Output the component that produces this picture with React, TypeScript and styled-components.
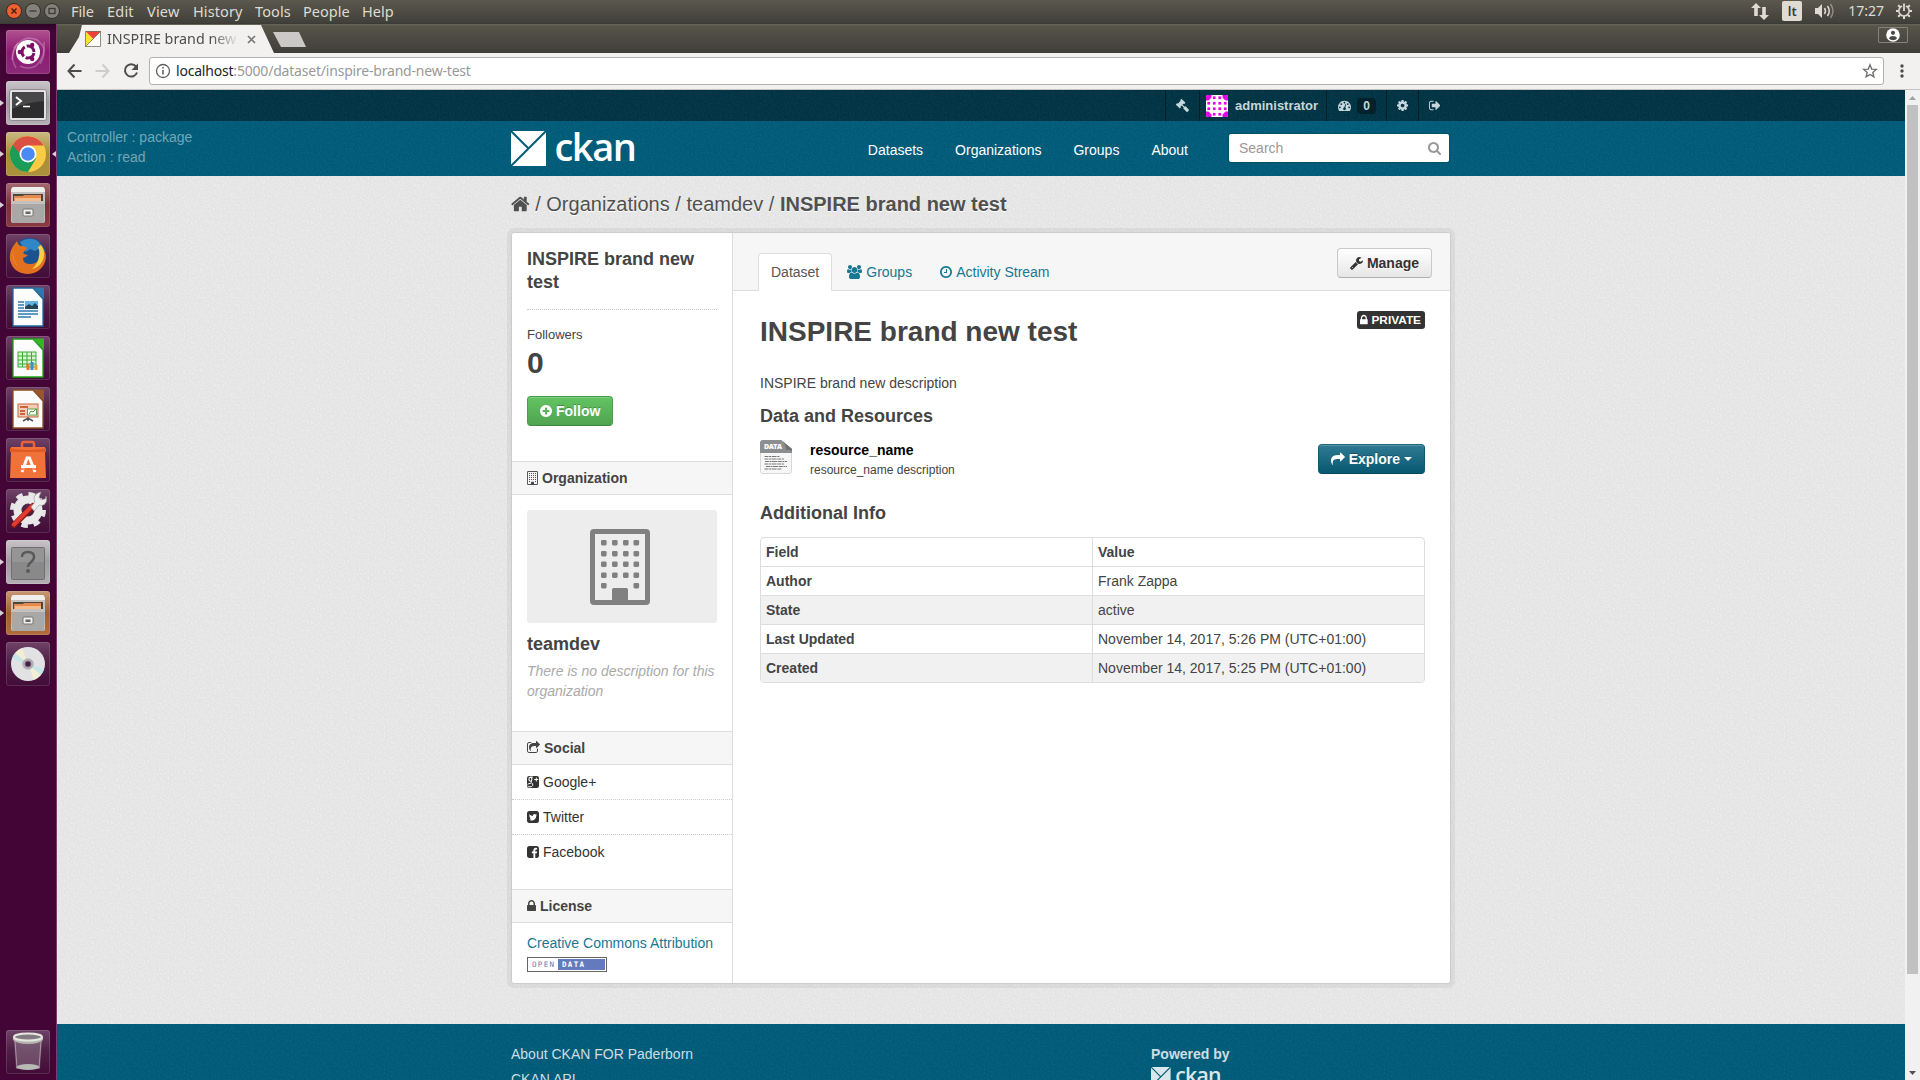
import React from 'react';
import styled, { createGlobalStyle, css } from 'styled-components';
import { FaGavel } from 'react-icons/fa';

const SANS = '"Liberation Sans", Arial, sans-serif';
const SHELL = '"Noto Sans", "Open Sans", sans-serif';

const noise = (rgb: string, alpha: number) =>
  `url("data:image/svg+xml,${encodeURIComponent(
    `<svg xmlns='http://www.w3.org/2000/svg' width='100' height='100'><filter id='n' x='0' y='0' width='100%' height='100%'><feTurbulence type='fractalNoise' baseFrequency='0.55' numOctaves='2' seed='4' stitchTiles='stitch'/><feColorMatrix values='0 0 0 0 ${rgb} 0 0 0 0 ${rgb} 0 0 0 0 ${rgb} ${alpha} 0 0 0 -${alpha * 0.4}'/></filter><rect width='100' height='100' filter='url(#n)'/></svg>`
  )}")`;
const GRAIN_LIGHT = noise('1', 0.8);
const GRAIN_DARK = noise('1', 0.1);

const GlobalStyle = createGlobalStyle`
  * { box-sizing: border-box; }
  body { margin: 0; overflow: hidden; }
  h1, h2, p { margin: 0; }
`;

/* ---------- icons ---------- */

type Glyph = [number, number, string];

const glyphs: Record<string, Glyph> = {
  home: [64, 1664, 'M1472 992v480q0 26-19 45t-45 19h-384v-384h-256v384h-384q-26 0-45-19t-19-45v-480q0-1 .5-3t.5-3l575-474 575 474q1 2 1 6zm223-69l-62 74q-8 9-21 11h-3q-13 0-21-7l-692-577-692 577q-12 8-24 7-13-2-21-11l-62-74q-8-10-7-23.5t11-21.5l719-599q32-26 76-26t76 26l244 204v-195q0-14 9-23t23-9h192q14 0 23 9t9 23v408l219 182q10 8 11 21.5t-7 23.5z'],
  search: [64, 1664, 'M1216 832q0-185-131.5-316.5t-316.5-131.5-316.5 131.5-131.5 316.5 131.5 316.5 316.5 131.5 316.5-131.5 131.5-316.5zm512 832q0 52-38 90t-90 38q-54 0-90-38l-343-342q-179 124-399 124-143 0-273.5-55.5t-225-150-150-225-55.5-273.5 55.5-273.5 150-225 225-150 273.5-55.5 273.5 55.5 225 150 150 225 55.5 273.5q0 220-124 399l343 343q37 37 37 90z'],
  cog: [128, 1536, 'M1152 896q0-106-75-181t-181-75-181 75-75 181 75 181 181 75 181-75 75-181zm512-109v222q0 12-8 23t-20 13l-185 28q-19 54-39 91 35 50 107 138 10 12 10 25t-9 23q-27 37-99 108t-94 71q-12 0-26-9l-138-108q-44 23-91 38-16 136-29 186-7 28-36 28h-222q-14 0-24.5-8.5t-11.5-21.5l-28-184q-49-16-90-37l-141 107q-10 9-25 9-14 0-25-11-126-114-165-168-7-10-7-23 0-12 8-23 15-21 51-66.5t54-70.5q-27-50-41-99l-183-27q-13-2-21-12.5t-8-23.5v-222q0-12 8-23t19-13l186-28q14-46 39-92-40-57-107-138-10-12-10-24 0-10 9-23 26-36 98.5-107.5t94.5-71.5q13 0 26 10l138 107q44-23 91-38 16-136 29-186 7-28 36-28h222q14 0 24.5 8.5t11.5 21.5l28 184q49 16 90 37l142-107q9-9 24-9 13 0 25 10 129 119 165 170 7 8 7 22 0 12-8 23-15 21-51 66.5t-54 70.5q26 50 41 98l183 28q13 2 21 12.5t8 23.5z'],
  plusCircle: [128, 1536, 'M1344 960v-128q0-26-19-45t-45-19h-256v-256q0-26-19-45t-45-19h-128q-26 0-45 19t-19 45v256h-256q-26 0-45 19t-19 45v128q0 26 19 45t45 19h256v256q0 26 19 45t45 19h128q26 0 45-19t19-45v-256h256q26 0 45-19t19-45zm320-64q0 209-103 385.5t-279.5 279.5-385.5 103-385.5-103-279.5-279.5-103-385.5 103-385.5 279.5-279.5 385.5-103 385.5 103 279.5 279.5 103 385.5z'],
  share: [0, 1792, 'M1792 640q0 26-19 45l-512 512q-19 19-45 19t-45-19-19-45v-256h-224q-98 0-175.5 6t-154 21.5-133 42.5-105.5 69.5-80 101-48.5 138.5-17.5 181q0 55 5 123 0 6 2.5 23.5t2.5 26.5q0 15-8.5 25t-23.5 10q-16 0-28-17-7-9-13-22t-13.5-30-10.5-24q-127-285-127-451 0-199 53-333 162-403 875-403h224v-256q0-26 19-45t45-19 45 19l512 512q19 19 19 45z'],
  shareSquare: [64, 1664, 'M1472 989v259q0 119-84.5 203.5t-203.5 84.5h-832q-119 0-203.5-84.5t-84.5-203.5v-832q0-119 84.5-203.5t203.5-84.5h255q13 0 22.5 9.5t9.5 22.5q0 27-26 32-77 26-133 60-10 4-16 4h-112q-66 0-113 47t-47 113v832q0 66 47 113t113 47h832q66 0 113-47t47-113v-214q0-19 18-29 28-13 54-37 16-16 35-8 21 9 21 29zm237-496l-384 384q-18 19-45 19-12 0-25-5-39-17-39-59v-192h-160q-323 0-438 131-119 137-74 473 3 23-20 34-8 2-12 2-16 0-26-13-10-14-21-31t-39.5-68.5-49.5-99.5-38.5-114-17.5-122q0-49 3.5-91t14-90 28-88 47-81.5 68.5-74 94.5-61.5 124.5-48.5 159.5-30.5 196.5-11h160v-192q0-42 39-59 13-5 25-5 26 0 45 19l384 384q19 19 19 45t-19 45z'],
  signOut: [64, 1568, 'M704 1440q0 4 1 20t.5 26.5-3 23.5-10 19.5-20.5 6.5h-320q-119 0-203.5-84.5t-84.5-203.5v-704q0-119 84.5-203.5t203.5-84.5h320q13 0 22.5 9.5t9.5 22.5q0 4 1 20t.5 26.5-3 23.5-10 19.5-20.5 6.5h-320q-66 0-113 47t-47 113v704q0 66 47 113t113 47h312l11.5 1 11.5 3 8 5.5 7 9 2 13.5zm928-544q0 26-19 45l-544 544q-19 19-45 19t-45-19-19-45v-288h-448q-26 0-45-19t-19-45v-384q0-26 19-45t45-19h448v-288q0-26 19-45t45-19 45 19l544 544q19 19 19 45z'],
  clock: [128, 1536, 'M1024 544v448q0 14-9 23t-23 9h-320q-14 0-23-9t-9-23v-64q0-14 9-23t23-9h224v-352q0-14 9-23t23-9h64q14 0 23 9t9 23zm416 352q0-148-73-273t-198-198-273-73-273 73-198 198-73 273 73 273 198 198 273 73 273-73 198-198 73-273zm224 0q0 209-103 385.5t-279.5 279.5-385.5 103-385.5-103-279.5-279.5-103-385.5 103-385.5 279.5-279.5 385.5-103 385.5 103 279.5 279.5 103 385.5z'],
  lock: [320, 1152, 'M640 768h512v-192q0-106-75-181t-181-75-181 75-75 181v192zm832 96v576q0 40-28 68t-68 28h-960q-40 0-68-28t-28-68v-576q0-40 28-68t68-28h32v-192q0-184 132-316t316-132 316 132 132 316v192h32q40 0 68 28t28 68z'],
  wrench: [64, 1664, 'M448 1472q0-26-19-45t-45-19-45 19-19 45 19 45 45 19 45-19 19-45zm644-420l-682 682q-37 37-90 37-52 0-91-37l-106-108q-38-36-38-90 0-53 38-91l681-681q39 98 114.5 173.5t173.5 114.5zm634-435q0 39-23 106-47 134-164.5 217.5t-258.5 83.5q-185 0-316.5-131.5t-131.5-316.5 131.5-316.5 316.5-131.5q58 0 121.5 16.5t107.5 46.5q16 11 16 28t-16 28l-293 169v224l193 107q5-3 79-48.5t135.5-81 70.5-35.5q15 0 23.5 10t8.5 25z'],
  users: [0, 1920, 'M593 896q-162 5-265 128h-134q-82 0-138-40.5t-56-118.5q0-353 124-353 6 0 43.5 21t97.5 42.5 119 21.5q67 0 133-23-5 37-5 66 0 139 81 256zm1071 637q0 120-73 189.5t-194 69.5h-874q-121 0-194-69.5t-73-189.5q0-53 3.5-103.5t14-109 26.5-108.5 43-97.5 62-81 85.5-53.5 111.5-20q10 0 43 21.5t73 48 107 48 135 21.5 135-21.5 107-48 73-48 43-21.5q61 0 111.5 20t85.5 53.5 62 81 43 97.5 26.5 108.5 14 109 3.5 103.5zm-1024-1277q0 106-75 181t-181 75-181-75-75-181 75-181 181-75 181 75 75 181zm704 384q0 159-112.5 271.5t-271.5 112.5-271.5-112.5-112.5-271.5 112.5-271.5 271.5-112.5 271.5 112.5 112.5 271.5zm576 225q0 78-56 118.5t-138 40.5h-134q-103-123-265-128 81-117 81-256 0-29-5-66 66 23 133 23 59 0 119-21.5t97.5-42.5 43.5-21q124 0 124 353zm-128-609q0 106-75 181t-181 75-181-75-75-181 75-181 181-75 181 75 75 181z'],
  twitter: [128, 1536, 'M1408 610q-56 25-121 34 68-40 93-117-65 38-134 51-61-66-153-66-87 0-148.5 61.5t-61.5 148.5q0 29 5 48-129-7-242-65t-192-155q-29 50-29 106 0 114 91 175-47-1-100-26v2q0 75 50 133.5t123 72.5q-29 8-51 8-13 0-39-4 21 63 74.5 104t121.5 42q-116 90-261 90-26 0-50-3 148 94 322 94 112 0 210-35.5t168-95 120.5-137 75-162 24.5-168.5q0-18-1-27 63-45 105-109zm256-194v960q0 119-84.5 203.5t-203.5 84.5h-960q-119 0-203.5-84.5t-84.5-203.5v-960q0-119 84.5-203.5t203.5-84.5h960q119 0 203.5 84.5t84.5 203.5z'],
  facebook: [128, 1536, 'M1376 128q119 0 203.5 84.5t84.5 203.5v960q0 119-84.5 203.5t-203.5 84.5h-188v-595h199l30-232h-229v-148q0-56 23.5-84t91.5-28l122-1v-207q-63-9-178-9-136 0-217.5 80t-81.5 226v171h-200v232h200v595h-532q-119 0-203.5-84.5t-84.5-203.5v-960q0-119 84.5-203.5t203.5-84.5h960z'],
  dashboard: [0, 1792, 'M384 1152q0-53-37.5-90.5t-90.5-37.5-90.5 37.5-37.5 90.5 37.5 90.5 90.5 37.5 90.5-37.5 37.5-90.5zm192-448q0-53-37.5-90.5t-90.5-37.5-90.5 37.5-37.5 90.5 37.5 90.5 90.5 37.5 90.5-37.5 37.5-90.5zm428 481l101-382q6-26-7.5-48.5t-38.5-29.5-48 6.5-30 39.5l-101 382q-60 5-107 43.5t-63 98.5q-20 77 20 146t117 89 146-20 89-117q16-60-6-117t-72-91zm660-33q0-53-37.5-90.5t-90.5-37.5-90.5 37.5-37.5 90.5 37.5 90.5 90.5 37.5 90.5-37.5 37.5-90.5zm-640-640q0-53-37.5-90.5t-90.5-37.5-90.5 37.5-37.5 90.5 37.5 90.5 90.5 37.5 90.5-37.5 37.5-90.5zm448 192q0-53-37.5-90.5t-90.5-37.5-90.5 37.5-37.5 90.5 37.5 90.5 90.5 37.5 90.5-37.5 37.5-90.5zm320 448q0 261-141 483-19 29-54 29h-1402q-35 0-54-29-141-221-141-483 0-182 71-348t191-286 286-191 348-71 348 71 286 191 191 286 71 348z'],
};

const IconSvg = styled.svg`
  flex: none;
  fill: currentColor;
`;

const Icon = ({ name, size = 14 }: { name: string; size?: number }) => {
  const [x, w, d] = glyphs[name];
  return (
    <IconSvg width={(w / 1792) * size} height={size} viewBox={`${x} 0 ${w} 1792`}>
      <path d={d} />
    </IconSvg>
  );
};

const Building = ({ width, height, color }: { width: number; height: number; color: string }) => (
  <svg width={width} height={height} viewBox="0 0 60 76">
    <rect x="2.5" y="2.5" width="55" height="71" rx="1.5" fill="none" stroke={color} strokeWidth="5" />
    {[11, 22, 33, 43.5].map((x) =>
      [11, 22, 32.5, 43.5, 54].map((y) =>
        y === 54 && (x === 22 || x === 33) ? null : (
          <rect key={`${x}-${y}`} x={x} y={y} width="5.6" height="5.4" rx="1.3" fill={color} />
        )
      )
    )}
    <path d="M22 75V60.500q0-1.500 1.500-1.500h13q1.500 0 1.500 1.500V75z" fill={color} />
  </svg>
);

const GooglePlus = () => (
  <svg width="12" height="14" viewBox="0 0 12 14">
    <rect y="1" width="12" height="12" rx="2.200" fill="#333" />
    <g fill="none" stroke="#fff">
      <ellipse cx="3.400" cy="4.300" rx="1.500" ry="1.900" strokeWidth="1.100" />
      <path d="M3 2.100h3M4.500 6.200q-1.200 1 .2 1.800 1.500 1 1 2.300-.6 1.600-2.700 1.600-2 0-2.300-1.200M.6 9.300q1-.9 3.200-.9" strokeWidth="1" />
      <path d="M9.300 2.500v4M7.300 4.500h4" strokeWidth="1" />
    </g>
  </svg>
);

/* ---------- desktop shell ---------- */

const Screen = styled.div`
  width: 1920px;
  height: 1080px;
  overflow: hidden;
  display: flex;
  flex-direction: column;
  font: 14px/20px ${SANS};
  color: #444;
  background: #e7e7e7;
`;

const TopPanel = styled.header`
  height: 24px;
  flex: none;
  display: flex;
  align-items: center;
  padding: 0 8px 1px 6px;
  background: linear-gradient(#5b584d, #403f3a);
  border-bottom: 1px solid #3b3a36;
  font: 14.5px/20px ${SHELL};
  color: #dfdbd2;
`;

const WindowButtons = styled.div`
  display: flex;
  gap: 3px;
  width: 65px;
`;

const WindowButton = styled.svg`
  width: 16px;
  height: 16px;
`;

const MenuItem = styled.span<{ $w: number; $ls?: number }>`
  width: ${(p) => p.$w}px;
  letter-spacing: ${(p) => p.$ls ?? 0}px;
  white-space: nowrap;
`;

const Indicators = styled.div`
  margin-left: auto;
  display: flex;
  align-items: center;
`;

const LanguageBadge = styled.span`
  width: 20px;
  height: 20px;
  margin: 0 13px 0 13px;
  border-radius: 2px;
  background: #dfdbd2;
  color: #3c3b37;
  font: 600 13px/20px ${SHELL};
  text-align: center;
`;

const Clock = styled.span`
  margin: 0 12px 0 13px;
  font-size: 14px;
`;

const Workspace = styled.div`
  flex: 1;
  min-height: 0;
  display: flex;
`;

const Launcher = styled.nav`
  width: 57px;
  flex: none;
  display: flex;
  flex-direction: column;
  align-items: flex-start;
  gap: 7px;
  padding: 6px 0 6px 6px;
  background: linear-gradient(#2e0428, #420535 8px, #420535);
  border-right: 1px solid #7d3c70;
`;

const tileSkin = {
  plum: 'linear-gradient(#6f4267, #4f2147 45%, #420c38)',
  magenta: 'linear-gradient(#b1528f, #8e1a73 50%, #8b2a78)',
  silver: 'linear-gradient(#c9c4c9, #a19ba0 50%, #b5b0b5)',
  gold: 'linear-gradient(#cbb983, #a88f35 50%, #ad923d)',
  maroon: 'linear-gradient(#a36a70, #7b3038 50%, #8a3a42)',
  copper: 'linear-gradient(#c79874, #a0602e 50%, #b26c3c)',
};
type Skin = keyof typeof tileSkin;

const Tile = styled.div<{ $skin: Skin; $last?: boolean; $running?: boolean; $active?: boolean }>`
  position: relative;
  width: 44px;
  height: 44px;
  flex: none;
  border-radius: 3px;
  background: ${(p) => tileSkin[p.$skin]};
  box-shadow: inset 0 0 0 1px rgba(255, 255, 255, 0.13);
  ${(p) => p.$last && 'margin-top: auto;'}
  svg { display: block; }
  ${(p) => p.$running && css`
    &::before {
      content: '';
      position: absolute;
      left: -6px;
      top: 19px;
      border: 3px solid transparent;
      border-left: 4px solid #d9d0d7;
      border-right: 0;
    }
  `}
  ${(p) => p.$active && css`
    &::after {
      content: '';
      position: absolute;
      right: -6px;
      top: 19px;
      border: 3px solid transparent;
      border-right: 4px solid #d9d0d7;
      border-left: 0;
    }
  `}
`;

const Cabinet = () => (
  <>
    <path d="M5 8q0-4 3-4h28q3 0 3 4l0 30q0 2-2 2H7q-2 0-2-2z" fill="#c4c2c0" />
    <path d="M5 9q0-5 3-5h28q3 0 3 5z" fill="#efeeec" />
    <rect x="7" y="11" width="30" height="9" fill="#4a4644" />
    <path d="M8 13h9l1-1h17v8H8z" fill="#e58a4c" />
    <path d="M9 15h26v5H9z" fill="#f5bb8d" />
    <path d="M5 18h34l-1 20q0 2-2 2H8q-2 0-2-2z" fill="#aaa8a7" />
    <path d="M5 18h34v3H5z" fill="#c3c1c0" />
    <rect x="17" y="26" width="10" height="7" rx="1" fill="#efefef" stroke="#777" strokeWidth="1" />
    <rect x="19.500" y="28.500" width="5" height="2.500" fill="#666" />
  </>
);

const Sheet = ({ edge, fold, children }: { edge: string; fold: string; children: React.ReactNode }) => (
  <>
    <path d="M7 3h20l10 11v27H7z" fill="#fcfcfc" stroke={edge} strokeWidth="1.300" />
    <path d="M27 2.500h11V14z" fill={fold} />
    {children}
  </>
);

const launcherIcons: { skin: Skin; running?: boolean; active?: boolean; last?: boolean; art: React.ReactNode }[] = [
  {
    skin: 'magenta',
    art: (
      <>
        <g fill="none" stroke="#fff" strokeOpacity=".25" strokeWidth="1.500">
          <path d="M6 30Q8 12 22 8q10 0 14 7M38 12q2 14-8 24-8 4-16 0M8 18Q18 4 32 10" />
          <path d="M10 38Q2 24 12 13M34 34q7-10 2-20" />
        </g>
        <circle cx="22" cy="22" r="12" fill="#fff" />
        <circle cx="22" cy="22" r="6" fill="none" stroke="#7b1063" strokeWidth="3" strokeDasharray="10.600 2" strokeDashoffset="-1" />
        <circle cx="13.800" cy="22" r="2.200" fill="#7b1063" />
        <circle cx="26.200" cy="15" r="2.200" fill="#7b1063" />
        <circle cx="26.200" cy="29" r="2.200" fill="#7b1063" />
      </>
    ),
  },
  {
    skin: 'silver',
    running: true,
    art: (
      <>
        <rect x="3.500" y="8.500" width="37" height="31" rx="2" fill="#e2e0e2" stroke="#8e8a8d" />
        <rect x="6" y="11" width="32" height="26" fill="#2c2d2c" />
        <path d="M6 11h32v9Q22 21 6 28z" fill="#fff" opacity=".13" />
        <path d="M10 16l5 4-5 4" fill="none" stroke="#fff" strokeWidth="2" />
        <path d="M17 25.500h7" stroke="#fff" strokeWidth="1.500" />
      </>
    ),
  },
  {
    skin: 'gold',
    running: true,
    active: true,
    art: (
      <>
        <circle cx="22" cy="22" r="18" fill="#fccb45" />
        <path d="M22 22L6.400 13A18 18 0 0 0 22 40l8-13.500z" fill="#1a9d57" />
        <path d="M6.400 13A18 18 0 0 1 37.600 13.500H22q-6 1-8 8z" fill="#dc5043" />
        <circle cx="22" cy="22" r="8.500" fill="#fff" />
        <circle cx="22" cy="22" r="6.800" fill="#4a8af4" />
      </>
    ),
  },
  { skin: 'maroon', running: true, art: <Cabinet /> },
  {
    skin: 'plum',
    art: (
      <>
        <circle cx="23" cy="21" r="17" fill="#1d5290" />
        <path d="M14 8q9-6 18-1l4 6-7 4-5-2-4 3z" fill="#2f87c7" />
        <path d="M34 10q8 9 5 18-5 12-18 12Q7 39 4 26q-1-9 4-15l3-4q1 5 5 5 3 0 5 2l-4 5q2 2 5 2-3 3-5 3 0 6 7 6 7 0 10-6 3-6 0-14z" fill="#e2711f" />
        <path d="M35 11q5 6 2 15-4 8-11 9 6-5 7-13 1-5-1-9z" fill="#f9cf45" />
        <path d="M8 15q-3 10 4 17Q4 25 8 15z" fill="#f7b045" />
      </>
    ),
  },
  {
    skin: 'plum',
    art: (
      <Sheet edge="#1c6a9c" fold="#2f78a8">
        <path d="M12 17h6M12 20h6M12 23h6M12 26h20M12 29h20M12 32h13" stroke="#2a7ab2" strokeWidth="1.700" />
        <rect x="19" y="16" width="13" height="8" fill="#63b4e0" />
        <path d="M19 24v-2l4-3 3 2 3-3 3 3v3z" fill="#23465a" />
      </Sheet>
    ),
  },
  {
    skin: 'plum',
    art: (
      <Sheet edge="#1ea113" fold="#36b326">
        <rect x="12" y="16" width="18" height="15" fill="#daf3d4" stroke="#3caa35" strokeWidth="1" />
        <path d="M12 20h18M12 24h18M12 28h18M16.500 16v15M21 16v15M25.500 16v15" stroke="#3caa35" strokeWidth="1" />
        <path d="M22 34v-6" stroke="#e8762b" strokeWidth="3" />
        <path d="M26 34v-8" stroke="#3f8dc4" strokeWidth="3" />
        <path d="M30 34v-5" stroke="#e8a02b" strokeWidth="3" />
      </Sheet>
    ),
  },
  {
    skin: 'plum',
    art: (
      <Sheet edge="#8d4e22" fold="#99562a">
        <rect x="12" y="17" width="20" height="13" fill="#f4cdb8" stroke="#c76638" strokeWidth="1" />
        <path d="M14 20h8M14 24h5M14 27h5" stroke="#c9673b" strokeWidth="2" />
        <rect x="21.500" y="22" width="9" height="6" fill="#fff" stroke="#5fa64c" />
        <path d="M23 27l2-3 2 1 3-3" stroke="#3d9a32" fill="none" />
        <path d="M17 34l5-3 5 3M22 30v4" stroke="#555" strokeWidth="1.500" fill="none" />
      </Sheet>
    ),
  },
  {
    skin: 'plum',
    art: (
      <>
        <path d="M16 12V6q0-2 2-2h8q2 0 2 2v6" fill="none" stroke="#e4633a" strokeWidth="2.500" />
        <path d="M5 9h34v5l1 26H4l1-26z" fill="#f07238" />
        <path d="M4 14h36v-4q-18 4-36 0z" fill="#e15b26" />
        <path d="M16 34l5-14h2.500L29 34M15 28.500h15" fill="none" stroke="#fff" strokeWidth="3" />
        <path d="M14 31h17" stroke="#f07238" strokeWidth="1.500" />
      </>
    ),
  },
  {
    skin: 'plum',
    art: (
      <>
        <circle cx="22" cy="21" r="15" fill="none" stroke="#e5e5e5" strokeWidth="6" strokeDasharray="6.200 5.580" />
        <circle cx="22" cy="21" r="10.500" fill="none" stroke="#e9e9e9" strokeWidth="8" />
        <path d="M8 36L27 17" stroke="#8d1513" strokeWidth="6" strokeLinecap="round" />
        <path d="M8 35.500L26 17" stroke="#e03a33" strokeWidth="4" strokeLinecap="round" />
        <path d="M25 18l4-5q-3-6 3-9l3-1-2 5 2 3 4-1q1-1 1-3 2 7-3 9-2 1-4 0l-5 6z" fill="#eee" stroke="#9a9a9a" strokeWidth=".6" />
      </>
    ),
  },
  {
    skin: 'silver',
    running: true,
    art: (
      <>
        <rect x="5.500" y="7.500" width="33" height="32" rx="1" fill="#898989" stroke="#6f6f6f" />
        <path d="M6 8h32v14H6z" fill="#9d9d9d" opacity=".6" />
        <path d="M16 17q0-5 6-5t6 5q0 3-3.500 5.500-2.500 2-2.500 4.500" fill="none" stroke="#5a5a5a" strokeWidth="2.500" />
        <circle cx="22" cy="31" r="2" fill="#5a5a5a" />
      </>
    ),
  },
  { skin: 'copper', running: true, art: <Cabinet /> },
  {
    skin: 'plum',
    art: (
      <>
        <circle cx="22" cy="22" r="17" fill="#e2e2e4" />
        <path d="M22 22L9 11a17 17 0 0 1 7-5zM22 22l13 11a17 17 0 0 1-7 5z" fill="#f6f3cf" opacity=".8" />
        <path d="M22 22L6 17a17 17 0 0 1 3-6zM22 22l16 5a17 17 0 0 1-3 6z" fill="#bfe9e7" opacity=".8" />
        <circle cx="22" cy="22" r="5.800" fill="#b5afb6" />
        <circle cx="22" cy="22" r="3" fill="#4b1e45" stroke="#7c6f7b" />
      </>
    ),
  },
  {
    skin: 'plum',
    last: true,
    art: (
      <>
        <path d="M8 8h28l-2 31H10z" fill="#ccc" opacity=".28" />
        <path d="M9 11l2 27M35 11l-2 27" stroke="#ddd" opacity=".5" />
        <ellipse cx="22" cy="37" rx="11.500" ry="3" fill="#b8bab4" />
        <path d="M7 7v3q4 4 15 4t15-4V7z" fill="#b5b5b0" />
        <ellipse cx="22" cy="7" rx="14" ry="3.500" fill="#847a82" stroke="#e7e7e2" strokeWidth="2" />
      </>
    ),
  },
];

/* ---------- browser chrome ---------- */

const Browser = styled.div`
  flex: 1;
  min-width: 0;
  display: flex;
  flex-direction: column;
`;

const TabStrip = styled.div`
  height: 29px;
  flex: none;
  display: flex;
  align-items: flex-start;
  padding: 1px 12px 0 12px;
  background: linear-gradient(#69665b, #575449 2px, #3f3e39);
`;

const BrowserTab = styled.div`
  width: 205px;
  height: 28px;
  display: flex;
  align-items: center;
  padding: 0 17px 0 16px;
  background: #f2f1f0;
  clip-path: polygon(0 100%, 10px 12px, 13px 0, 192px 0, 205px 100%);
  font: 14.300px/20px ${SHELL};
  color: #4d4d4d;
`;

const TabTitle = styled.span`
  flex: none;
  width: 140px;
  margin-left: 6px;
  overflow: hidden;
  white-space: nowrap;
  mask-image: linear-gradient(90deg, #000 105px, transparent 132px);
`;

const NewTab = styled.div`
  width: 33px;
  height: 15px;
  margin: 7px 0 0 -1px;
  background: #cbc9c7;
  clip-path: polygon(0 0, 26px 0, 100% 100%, 8px 100%);
`;

const ProfileButton = styled.div`
  width: 30px;
  height: 16px;
  margin: 2px 0 0 auto;
  display: flex;
  align-items: center;
  justify-content: center;
  border: 1px solid #85827a;
  border-radius: 1px;
`;

const Toolbar = styled.div`
  height: 37px;
  flex: none;
  display: flex;
  align-items: center;
  padding: 0 0 1px 9px;
  background: #f2f1f0;
  border-bottom: 1px solid #c6c4c2;
`;

const NavIcon = styled.svg`
  width: 18px;
  height: 18px;
  margin-right: 10px;
  flex: none;
`;

const Omnibox = styled.div`
  width: 1735px;
  height: 28px;
  margin-left: -1px;
  display: flex;
  align-items: center;
  padding: 0 5px;
  border: 1px solid #b3b1af;
  border-radius: 3px;
  background: #fff;
  font: 14px/20px ${SHELL};
  letter-spacing: -0.2px;
  color: #999;
  b { font-weight: 400; color: #222; }
`;

const Url = styled.span`
  margin-left: 5px;
  flex: 1;
`;

const Dots = styled.svg`
  margin-left: 13px;
`;

const Viewport = styled.div`
  flex: 1;
  min-height: 0;
  display: flex;
`;

const Scrollbar = styled.div`
  width: 15px;
  display: flex;
  flex-direction: column;
  align-items: center;
  background: #f1f1f1;
`;

const ScrollThumb = styled.div`
  width: 11px;
  height: 869px;
  margin: 1px 0 auto;
  background: #c1c1c1;
`;

/* ---------- web page ---------- */

const Page = styled.main`
  flex: 1;
  min-width: 0;
  display: flex;
  flex-direction: column;
  overflow: hidden;
  background: #e4e4e4 ${GRAIN_LIGHT};
`;

const AccountBar = styled.div`
  height: 31px;
  flex: none;
  background: #003343 ${GRAIN_DARK};
`;

const Container = styled.div`
  width: 940px;
  margin: 0 auto;
`;

const AccountList = styled(Container)`
  height: 31px;
  display: flex;
  padding-left: 654px;
`;

const AccountItem = styled.div<{ $w: number; $gap?: number; $pad?: number }>`
  width: ${(p) => p.$w}px;
  display: flex;
  align-items: center;
  gap: ${(p) => p.$gap ?? 0}px;
  padding-left: ${(p) => p.$pad ?? 10}px;
  border-left: 1px solid #00202b;
  color: #c6d7db;
  font: bold 13px/31px ${SANS};
`;

const Flip = styled.span`
  display: flex;
  transform: scaleX(-1);
`;

const Count = styled.span`
  width: 19px;
  height: 16px;
  border-radius: 4px;
  background: #00222d;
  font: bold 12px/16px ${SANS};
  text-align: center;
`;

const Masthead = styled.div`
  height: 55px;
  flex: none;
  display: flex;
  background: #005b78 ${GRAIN_DARK};
`;

const DebugInfo = styled.div`
  width: 454px;
  padding: 6px 0 0 10px;
  flex: none;
  color: #73a6b6;
`;

const MastheadInner = styled.div`
  width: 940px;
  display: flex;
  align-items: flex-start;
`;

const Logo = styled.div<{ $scale: number }>`
  display: flex;
  align-items: flex-start;
  width: ${(p) => 125 * p.$scale}px;
  height: ${(p) => 36 * p.$scale}px;
  gap: ${(p) => 8.5 * p.$scale}px;
  color: #fff;
  span {
    margin-top: ${(p) => -10 * p.$scale}px;
    font: 600 ${(p) => 38 * p.$scale}px/${(p) => 50 * p.$scale}px "Open Sans", sans-serif;
    letter-spacing: ${(p) => -1.5 * p.$scale}px;
  }
`;

const LogoLink = styled.div`
  margin-top: 10px;
`;

const MainNav = styled.nav`
  display: flex;
  gap: 32px;
  margin: 19px 1px 0 auto;
  color: #fff;
`;

const SearchBox = styled.div`
  width: 220px;
  height: 28px;
  margin: 13px 2px 0 40px;
  display: flex;
  align-items: center;
  justify-content: space-between;
  padding: 0 8px 0 10px;
  border-radius: 2px;
  background: #fff;
  box-shadow: 0 0 2px rgba(0, 0, 0, 0.5);
  color: #999;
`;

const Breadcrumb = styled(Container)`
  height: 56px;
  flex: none;
  display: flex;
  align-items: center;
  gap: 5.6px;
  font-size: 20px;
  line-height: 24px;
  color: #505050;
  text-shadow: 0 1px 0 #fff;
`;

const Wrapper = styled(Container)`
  height: 752px;
  flex: none;
  display: flex;
  border: 1px solid #ccc;
  border-radius: 3px;
  background: #fff;
  box-shadow: 0 0 0 4px rgba(0, 0, 0, 0.05);
`;

const Sidebar = styled.aside`
  width: 221px;
  flex: none;
  border-right: 1px solid #ddd;
`;

const Heading = styled.h2`
  font: bold 18px/23px ${SANS};
  color: #444;
`;

const Summary = styled.section`
  padding: 15px 15px 35px;
`;

const SidebarTitle = styled(Heading)`
  padding-bottom: 15px;
  border-bottom: 1px dotted #ccc;
`;

const FollowerLabel = styled.div`
  margin-top: 15px;
  font-size: 13px;
`;

const FollowerCount = styled.div`
  margin: 3px 0 18px;
  font: bold 30px/30px ${SANS};
`;

const buttonSkin = {
  green: css`
    color: #fff;
    background: linear-gradient(#62c462, #51a351);
    border-color: #4a9a4a #4a9a4a #3f8a3f;
    text-shadow: 0 -1px 0 rgba(0, 0, 0, 0.25);
    box-shadow: inset 0 1px 0 rgba(255, 255, 255, 0.2);
  `,
  teal: css`
    color: #fff;
    background: linear-gradient(#2f7a93, #085871);
    border-color: #1e667e #0f5a72 #024a60;
    text-shadow: 0 -1px 0 rgba(0, 0, 0, 0.25);
    box-shadow: inset 0 1px 0 rgba(255, 255, 255, 0.2);
  `,
  plain: css`
    color: #333;
    background: linear-gradient(#fff, #e6e6e6);
    border-color: #c9c9c9 #c9c9c9 #b0b0b0;
    text-shadow: 0 1px 1px rgba(255, 255, 255, 0.75);
  `,
};

const Button = styled.button<{ $skin: keyof typeof buttonSkin }>`
  height: 30px;
  flex: none;
  display: inline-flex;
  align-items: center;
  gap: 4px;
  padding: 0 12px;
  border: 1px solid;
  border-radius: 4px;
  font: bold 14px/20px ${SANS};
  ${(p) => buttonSkin[p.$skin]}
`;

const Caret = styled.span`
  border: 4px solid transparent;
  border-top-color: #fff;
  border-bottom: 0;
`;

const ModuleHeading = styled.div`
  height: 34px;
  display: flex;
  align-items: center;
  gap: 4px;
  padding: 0 15px;
  background: #f6f6f6;
  border: solid #ddd;
  border-width: 1px 0;
  font-weight: bold;
`;

const OrgBlock = styled.section`
  padding: 15px 15px 30px;
`;

const OrgImage = styled.div`
  height: 113px;
  display: flex;
  align-items: center;
  justify-content: center;
  padding: 1px 4px 0 0;
  margin-bottom: 10px;
  border-radius: 3px;
  background: #ededed;
`;

const Empty = styled.p`
  margin-top: 5px;
  font-style: italic;
  color: #aaa;
`;

const SocialList = styled.div`
  margin-bottom: 20px;
`;

const SocialItem = styled.div`
  height: 35px;
  display: flex;
  align-items: center;
  gap: 4px;
  padding: 0 15px;
  color: #333;
  border-bottom: 1px dotted #ccc;
  &:last-child { height: 34px; border: 0; }
`;

const License = styled.div`
  padding: 10px 15px;
  color: #187794;
`;

const OpenData = styled.div`
  width: 80px;
  height: 15px;
  margin-top: 4px;
  display: flex;
  border: 1px solid #666;
  padding: 1px;
  background: #fff;
  font: 7.500px/11px "DejaVu Sans Mono", monospace;
  letter-spacing: 1.3px;
  color: #637bbd;
  span { width: 29px; padding-left: 3px; }
  b { flex: 1; padding-left: 4px; background: #637bbd; color: #fff; }
`;

const Primary = styled.section`
  flex: 1;
  min-width: 0;
`;

const PageHeader = styled.header`
  height: 58px;
  display: flex;
  align-items: flex-end;
  padding: 0 18px 0 25px;
  background: #f6f6f6;
  border-bottom: 1px solid #ddd;
  border-radius: 0 3px 0 0;
  button { margin: 0 0 12px auto; }
`;

const Tab = styled.div<{ $active?: boolean }>`
  height: 38px;
  margin: 0 2px -1px 0;
  display: flex;
  align-items: center;
  gap: 4px;
  padding: 0 12px 0;
  border: 1px solid transparent;
  border-radius: 4px 4px 0 0;
  color: #187794;
  ${(p) => p.$active && css`
    color: #555;
    background: #fff;
    border-color: #ddd #ddd #fff;
  `}
`;

const Content = styled.div`
  padding: 20px 25px 0 27px;
`;

const TitleRow = styled.div`
  display: flex;
  justify-content: space-between;
  align-items: flex-start;
  margin-bottom: 23px;
`;

const Title = styled.h1`
  margin-top: 3px;
  font: bold 28px/36px ${SANS};
`;

const PrivateLabel = styled.span`
  height: 18px;
  display: flex;
  align-items: center;
  gap: 3.5px;
  padding: 0 4px 0 3px;
  border-radius: 3px;
  background: #333;
  color: #fff;
  font: bold 11.840px/18px ${SANS};
`;

const Notes = styled.p`
  margin-bottom: 12px;
`;

const Resource = styled.div`
  display: flex;
  align-items: flex-start;
  margin: 12px 0 22px;
  button { margin: 4px 0 0 auto; }
`;

const ResourceText = styled.div`
  margin-left: 18px;
  font-size: 12px;
  b { display: block; font-size: 14px; color: #000; }
`;

const InfoTable = styled.table`
  width: 665px;
  margin-top: 12px;
  table-layout: fixed;
  border: 1px solid #ddd;
  border-radius: 4px;
  border-spacing: 0;
  overflow: hidden;
  th, td { height: 29px; padding: 0 5px; text-align: left; border-top: 1px solid #ddd; }
  th:first-child { width: 331px; }
  td, th + th { border-left: 1px solid #ddd; padding-left: 5px; }
  tr:first-child > * { height: 28px; border-top: 0; }
  tr:nth-child(odd):not(:first-child) > * { background: #f1f1f1; }
`;

const Footer = styled.footer`
  height: 200px;
  flex: none;
  margin-top: 40px;
  background: #005b78 ${GRAIN_DARK};
  color: #ccdee3;
`;

const FooterInner = styled(Container)`
  display: flex;
  padding-top: 20px;
  line-height: 20px;
`;

const FooterColumn = styled.div<{ $w: number }>`
  width: ${(p) => p.$w}px;
  display: flex;
  flex-direction: column;
  gap: 5px;
`;

const PoweredBy = styled.b`
  margin-bottom: -2px;
`;

const CkanLogo = ({ scale = 1, color = '#fff' }: { scale?: number; color?: string }) => (
  <Logo $scale={scale} style={{ color }}>
    <svg width={35 * scale} height={35 * scale} viewBox="0 0 35 35">
      <path d="M0 0h35v35H0z" fill="currentColor" />
      <path d="M0 0l17.500 17.500M35 0L0 35" stroke="#005d7a" strokeWidth="2" />
    </svg>
    <span>ckan</span>
  </Logo>
);

const Avatar = () => (
  <svg width="22" height="22" viewBox="0 0 22 22">
    <rect width="22" height="22" rx="2" fill="#fff" />
    <g fill="#e800e8">
      <path d="M0 2q0-2 2-2h3.500v2.500L2.500 5.500H0zM22 2q0-2-2-2h-3.500v2.500l3 3H22zM0 20q0 2 2 2h3.500v-2.500l-3-3H0zM22 20q0 2-2 2h-3.500v-2.500l3-3H22z" />
      {[1, 6.5, 12, 17.5].map((x) =>
        [1, 6.5, 12, 17.5].map((y) => <rect key={`${x}-${y}`} x={x + 0.4} y={y + 0.4} width="2.7" height="2.7" />)
      )}
    </g>
  </svg>
);

const DataIcon = () => (
  <svg width="32" height="34" viewBox="0 0 32 34">
    <path d="M.5 3q0-2.500 2.500-2.500h18L31.500 9v22q0 2.500-2.500 2.500H3Q.5 33.500.5 31z" fill="#f7f7f7" stroke="#d8d8d8" />
    <path d="M0 3q0-3 3-3h18l11 9v4H0z" fill="#8c8e8f" />
    <path d="M21 0l11 9v2q-2-2-6-1 0-6-5-10z" fill="#6d6f70" />
    <text x="4" y="9.300" fontFamily="Open Sans" fontWeight="800" fontSize="7" textLength="18" fill="#fff">DATA</text>
    <path d="M4.500 16.500h15M4.500 19h20M5 21.500h22M4.500 24h20M6 26.500h21M4.500 29h17" stroke="#777" strokeWidth="1" strokeDasharray="4 .6 2 .5 5 .7" />
  </svg>
);

const menu: [string, number, number][] = [
  ['File', 36, -0.1], ['Edit', 40, 0.2], ['View', 46, 0.2], ['History', 62, 0.1], ['Tools', 48, 0.1], ['People', 59, 0], ['Help', 40, 0],
];

const info: [string, string][] = [
  ['Author', 'Frank Zappa'],
  ['State', 'active'],
  ['Last Updated', 'November 14, 2017, 5:26 PM (UTC+01:00)'],
  ['Created', 'November 14, 2017, 5:25 PM (UTC+01:00)'],
];

const DesktopPanel = () => (
  <TopPanel>
    <WindowButtons>
      <WindowButton viewBox="0 0 16 16">
        <circle cx="8" cy="8" r="7.500" fill="#ee6032" stroke="#3a2b22" />
        <path d="M5.500 5.500l5 5M10.500 5.500l-5 5" stroke="#4a2213" strokeWidth="1.500" />
      </WindowButton>
      <WindowButton viewBox="0 0 16 16">
        <circle cx="8" cy="8" r="7.500" fill="#83817a" stroke="#33322e" />
        <path d="M4.500 8h7" stroke="#3b3a36" strokeWidth="1.300" />
      </WindowButton>
      <WindowButton viewBox="0 0 16 16">
        <circle cx="8" cy="8" r="7.500" fill="#83817a" stroke="#33322e" />
        <rect x="5" y="5.500" width="6" height="5" fill="none" stroke="#3b3a36" strokeWidth="1.300" />
      </WindowButton>
    </WindowButtons>
    {menu.map(([label, w, ls]) => (
      <MenuItem key={label} $w={w} $ls={ls}>{label}</MenuItem>
    ))}
    <Indicators>
      <svg width="18" height="18" viewBox="0 0 18 18" fill="#dfdbd2">
        <path d="M5 1l5 5H6.800v8H3.200V6H0zM13 18l-5-5h3.200V5h3.600v8H18z" />
      </svg>
      <LanguageBadge>lt</LanguageBadge>
      <svg width="20" height="18" viewBox="0 0 20 18" fill="none" stroke="#dfdbd2" strokeWidth="1.500">
        <path d="M0 6h3l4-4v14l-4-4H0z" fill="#dfdbd2" stroke="none" />
        <path d="M9.500 6q2 3 0 6M12.500 4q3.500 5 0 10" />
        <path d="M15.500 2q5 7 0 14" opacity=".45" />
      </svg>
      <Clock>17:27</Clock>
      <svg width="16" height="16" viewBox="0 0 16 16" fill="none" stroke="#dfdbd2">
        <path d="M6 3.100a5.200 5.200 0 1 0 4 0" strokeWidth="1.600" />
        <path d="M8 .5v7.500" strokeWidth="1.800" />
        <path d="M4 4L2.200 2.200M12 4l1.800-1.800M0 8h2.500M13.500 8H16M4 12l-1.800 1.800M12 12l1.800 1.800M8 13.200V16" strokeWidth="2" />
      </svg>
    </Indicators>
  </TopPanel>
);

const BrowserChrome = () => (
  <>
    <TabStrip>
      <BrowserTab>
        <svg width="16" height="16" viewBox="0 0 16 16">
          <path d="M0 0h16v16H0z" fill="#fff" />
          <path d="M0 0h16L8 8z" fill="#ef4136" />
          <path d="M0 0l8 8-8 8z" fill="#f9e32a" />
          <path d="M.5.500h15v15H.5zM16 0L0 16" fill="none" stroke="#77705f" strokeWidth=".8" />
        </svg>
        <TabTitle>INSPIRE brand new</TabTitle>
        <svg width="9" height="9" viewBox="0 0 9 9"><path d="M1 1l7 7M8 1L1 8" stroke="#777" strokeWidth="1.700" /></svg>
      </BrowserTab>
      <NewTab />
      <ProfileButton>
        <svg width="14" height="14" viewBox="0 0 14 14">
          <circle cx="7" cy="7" r="6.800" fill="#fff" />
          <circle cx="7" cy="4.800" r="2.100" fill="#4b4a44" />
          <path d="M2.800 10.200Q4 8 7 8t4.200 2.200Q9.700 12.200 7 12.200t-4.200-2z" fill="#4b4a44" />
        </svg>
      </ProfileButton>
    </TabStrip>
    <Toolbar>
      <NavIcon viewBox="0 0 18 18" fill="none" stroke="#4c4c4c" strokeWidth="2"><path d="M15.500 9H3M8.500 2.500L2.500 9l6 6.500" /></NavIcon>
      <NavIcon viewBox="0 0 18 18" fill="none" stroke="#cfcdcc" strokeWidth="2"><path d="M1.500 9H14M8.500 2.500l6 6.500-6 6.500" /></NavIcon>
      <NavIcon viewBox="0 0 18 18" fill="none" stroke="#4c4c4c" strokeWidth="2">
        <path d="M14 4.500A6.200 6.200 0 1 0 15 10.500" />
        <path d="M16 1.500V8H9.500z" fill="#4c4c4c" stroke="none" />
      </NavIcon>
      <Omnibox>
        <svg width="16" height="16" viewBox="0 0 16 16" fill="none" stroke="#5f5f5f" strokeWidth="1.300">
          <circle cx="8" cy="8" r="6.500" />
          <path d="M8 7v4.500M8 4v1.600" strokeWidth="1.600" />
        </svg>
        <Url><b>localhost</b>:5000/dataset/inspire-brand-new-test</Url>
        <svg width="16" height="16" viewBox="0 0 16 16" fill="none" stroke="#6b6b6b" strokeWidth="1.300">
          <path d="M8 1.800l1.700 4.300 4.600.3-3.500 3 1.100 4.500L8 11.400l-3.900 2.500 1.100-4.500-3.500-3 4.600-.3z" />
        </svg>
      </Omnibox>
      <Dots width="10" height="14" viewBox="0 0 10 14" fill="#4c4c4c">
        <circle cx="5" cy="2" r="1.700" /><circle cx="5" cy="7" r="1.700" /><circle cx="5" cy="12" r="1.700" />
      </Dots>
    </Toolbar>
  </>
);

const SiteHeader = () => (
  <>
    <AccountBar>
      <AccountList>
        <AccountItem $w={34}><Flip><FaGavel size={13} /></Flip></AccountItem>
        <AccountItem $w={127} $gap={7} $pad={6}><Avatar />administrator</AccountItem>
        <AccountItem $w={60} $gap={6} $pad={11}><Icon name="dashboard" size={13} /><Count>0</Count></AccountItem>
        <AccountItem $w={32}><Icon name="cog" size={13} /></AccountItem>
        <AccountItem $w={33}><Icon name="signOut" size={13} /></AccountItem>
      </AccountList>
    </AccountBar>
    <Masthead>
      <DebugInfo>Controller : package<br />Action : read</DebugInfo>
      <MastheadInner>
        <LogoLink><CkanLogo /></LogoLink>
        <MainNav>
          <span>Datasets</span><span>Organizations</span><span>Groups</span><span>About</span>
        </MainNav>
        <SearchBox>Search<Icon name="search" /></SearchBox>
      </MastheadInner>
    </Masthead>
  </>
);

const DatasetSidebar = () => (
  <Sidebar>
    <Summary>
      <SidebarTitle>INSPIRE brand new test</SidebarTitle>
      <FollowerLabel>Followers</FollowerLabel>
      <FollowerCount>0</FollowerCount>
      <Button $skin="green"><Icon name="plusCircle" />Follow</Button>
    </Summary>
    <ModuleHeading><Building width={11} height={14} color="#444" />Organization</ModuleHeading>
    <OrgBlock>
      <OrgImage><Building width={60} height={76} color="#808080" /></OrgImage>
      <Heading>teamdev</Heading>
      <Empty>There is no description for this organization</Empty>
    </OrgBlock>
    <ModuleHeading><Icon name="shareSquare" />Social</ModuleHeading>
    <SocialList>
      <SocialItem><GooglePlus />Google+</SocialItem>
      <SocialItem><Icon name="twitter" />Twitter</SocialItem>
      <SocialItem><Icon name="facebook" />Facebook</SocialItem>
    </SocialList>
    <ModuleHeading><Icon name="lock" />License</ModuleHeading>
    <License>
      Creative Commons Attribution
      <OpenData><span>OPEN</span><b>DATA</b></OpenData>
    </License>
  </Sidebar>
);

const DatasetContent = () => (
  <Primary>
    <PageHeader>
      <Tab $active>Dataset</Tab>
      <Tab><Icon name="users" />Groups</Tab>
      <Tab><Icon name="clock" />Activity Stream</Tab>
      <Button $skin="plain"><Icon name="wrench" />Manage</Button>
    </PageHeader>
    <Content>
      <TitleRow>
        <Title>INSPIRE brand new test</Title>
        <PrivateLabel><Icon name="lock" size={12} />PRIVATE</PrivateLabel>
      </TitleRow>
      <Notes>INSPIRE brand new description</Notes>
      <Heading>Data and Resources</Heading>
      <Resource>
        <DataIcon />
        <ResourceText><b>resource_name</b>resource_name description</ResourceText>
        <Button $skin="teal"><Icon name="share" />Explore<Caret /></Button>
      </Resource>
      <Heading>Additional Info</Heading>
      <InfoTable>
        <tbody>
          <tr><th>Field</th><th>Value</th></tr>
          {info.map(([field, value]) => (
            <tr key={field}><th>{field}</th><td>{value}</td></tr>
          ))}
        </tbody>
      </InfoTable>
    </Content>
  </Primary>
);

export default function App() {
  return (
    <Screen>
      <GlobalStyle />
      <DesktopPanel />
      <Workspace>
        <Launcher>
          {launcherIcons.map((item, i) => (
            <Tile key={i} $skin={item.skin} $running={item.running} $active={item.active} $last={item.last}>
              <svg width="44" height="44" viewBox="0 0 44 44">{item.art}</svg>
            </Tile>
          ))}
        </Launcher>
        <Browser>
          <BrowserChrome />
          <Viewport>
            <Page>
              <SiteHeader />
              <Breadcrumb>
                <Icon name="home" size={20} />
                <span>/</span><span>Organizations</span><span>/</span><span>teamdev</span><span>/</span>
                <b>INSPIRE brand new test</b>
              </Breadcrumb>
              <Wrapper>
                <DatasetSidebar />
                <DatasetContent />
              </Wrapper>
              <Footer>
                <FooterInner>
                  <FooterColumn $w={640}><span>About CKAN FOR Paderborn</span><span>CKAN API</span></FooterColumn>
                  <FooterColumn $w={300}><PoweredBy>Powered by</PoweredBy><CkanLogo scale={0.56} color="#d9e7eb" /></FooterColumn>
                </FooterInner>
              </Footer>
            </Page>
            <Scrollbar>
              <svg width="15" height="14" viewBox="0 0 15 14"><path d="M4 10l3.500-4L11 10z" fill="#a3a3a3" /></svg>
              <ScrollThumb />
              <svg width="15" height="14" viewBox="0 0 15 14"><path d="M4 5l3.500 4L11 5z" fill="#505050" /></svg>
            </Scrollbar>
          </Viewport>
        </Browser>
      </Workspace>
    </Screen>
  );
}
